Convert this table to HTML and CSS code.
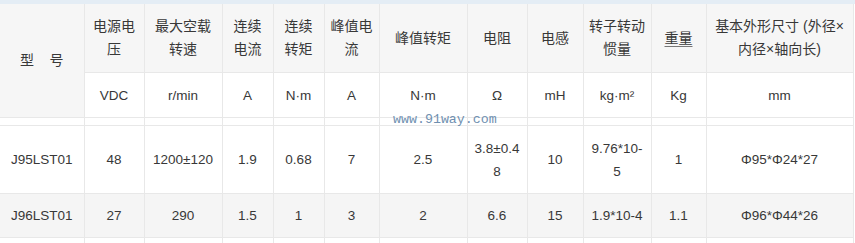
FILE: index.html
```html
<!DOCTYPE html>
<html lang="zh">
<head>
<meta charset="utf-8">
<link rel="stylesheet" href="styles.css">
</head>
<body>
<div class="page">
  <div class="strip"></div>
  <table class="spec">
    <colgroup>
      <col class="c84"><col class="c60"><col class="c78"><col class="c51"><col class="c51"><col class="c55"><col class="c88"><col class="c60"><col class="c56"><col class="c68"><col class="c55"><col class="c147">
    </colgroup>
    <tr class="head">
      <td rowspan="2" class="model-h">型&nbsp;&nbsp;&nbsp;&nbsp;号</td>
      <td>电源电压</td>
      <td>最大空载转速</td>
      <td>连续电流</td>
      <td>连续转矩</td>
      <td>峰值电流</td>
      <td>峰值转矩</td>
      <td>电阻</td>
      <td>电感</td>
      <td>转子转动惯量</td>
      <td><span class="ul">重量</span></td>
      <td>基本外形尺寸 (外径×内径×轴向长)</td>
    </tr>
    <tr class="units">
      <td>VDC</td>
      <td>r/min</td>
      <td>A</td>
      <td>N·m</td>
      <td>A</td>
      <td>N·m</td>
      <td>Ω</td>
      <td>mH</td>
      <td>kg·m²</td>
      <td>Kg</td>
      <td>mm</td>
    </tr>
    <tr class="gap">
      <td></td><td></td><td></td><td></td><td></td><td></td><td></td><td></td><td></td><td></td><td></td><td></td>
    </tr>
    <tr class="row1">
      <td>J95LST01</td>
      <td>48</td>
      <td>1200±120</td>
      <td>1.9</td>
      <td>0.68</td>
      <td>7</td>
      <td>2.5</td>
      <td>3.8±0.4<br>8</td>
      <td>10</td>
      <td>9.76*10-<br>5</td>
      <td>1</td>
      <td>Φ95*Φ24*27</td>
    </tr>
    <tr class="row2">
      <td>J96LST01</td>
      <td>27</td>
      <td>290</td>
      <td>1.5</td>
      <td>1</td>
      <td>3</td>
      <td>2</td>
      <td>6.6</td>
      <td>15</td>
      <td>1.9*10-4</td>
      <td>1.1</td>
      <td>Φ96*Φ44*26</td>
    </tr>
    <tr class="tail">
      <td></td><td></td><td></td><td></td><td></td><td></td><td></td><td></td><td></td><td></td><td></td><td></td>
    </tr>
  </table>
  <div class="watermark">www.91way.com</div>
</div>
</body>
</html>
```

FILE: styles.css
```css
html, body {
  margin: 0;
  padding: 0;
  background: #ffffff;
}
.page {
  position: relative;
  width: 855px;
  height: 243px;
  overflow: hidden;
  font-family: "Liberation Sans", "Noto Sans CJK SC", sans-serif;
  color: #383838;
  font-size: 14px;
}
.strip {
  height: 4px;
  background: #e4edf5;
}
.spec {
  border-collapse: collapse;
  table-layout: fixed;
  width: 853px;
}
.spec td {
  border: 1px solid #e8e8e8;
  text-align: center;
  vertical-align: middle;
  padding: 0 5px;
  line-height: 23px;
  word-break: break-all;
}
.spec tr td:first-child {
  border-left: none;
}
.spec tr:first-child td {
  border-top: none;
}
.c84 { width: 84px; }
.c60 { width: 60px; }
.c78 { width: 78px; }
.c51 { width: 51px; }
.c55 { width: 55px; }
.c88 { width: 88px; }
.c56 { width: 56px; }
.c68 { width: 68px; }
.c147 { width: 147px; }
.head td {
  height: 68px;
  background: #f6f6f6;
  font-size: 14px;
}
.units td {
  height: 44px;
  background: #ffffff;
  font-size: 13.5px;
}
.gap td {
  height: 7px;
  padding: 0;
  line-height: 0;
  font-size: 0;
  background: #ffffff;
}
.row1 td,
.row2 td {
  font-size: 13.5px;
  white-space: nowrap;
  word-break: normal;
}
.row1 td {
  height: 67px;
  background: #ffffff;
}
.row2 td {
  height: 43px;
  background: #f5f5f5;
}
.tail td {
  height: 10px;
  background: #ffffff;
}
.ul {
  text-decoration: underline;
  text-underline-offset: 3px;
  text-decoration-color: #777;
}
.watermark {
  position: absolute;
  left: 393px;
  top: 113px;
  font-family: "Liberation Mono", "DejaVu Sans Mono", monospace;
  font-size: 13.3px;
  line-height: 14px;
  color: #6f8fb0;
}
```
